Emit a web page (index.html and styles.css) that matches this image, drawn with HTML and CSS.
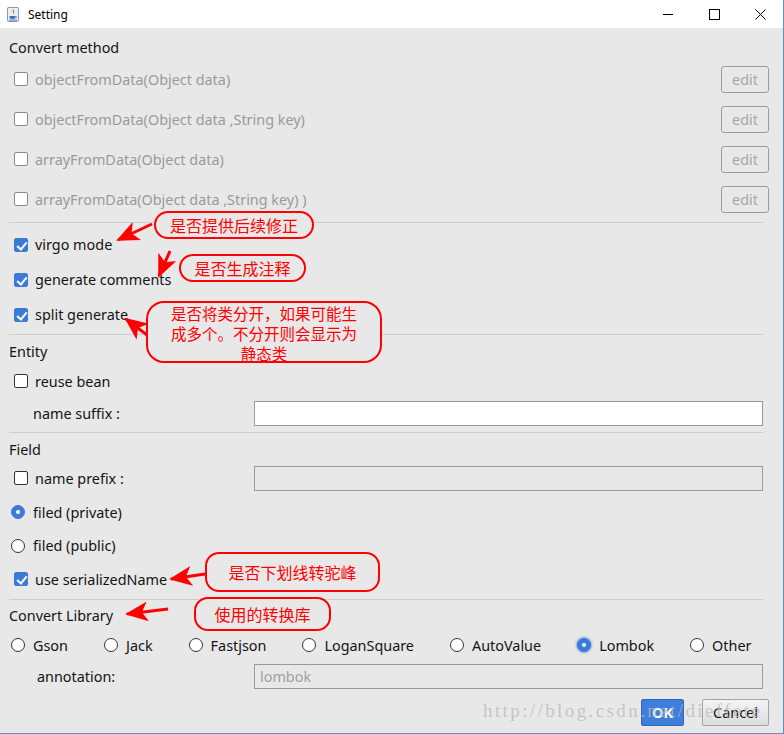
FILE: index.html
```html
<!DOCTYPE html>
<html>
<head>
<meta charset="utf-8">
<title>Setting</title>
<link rel="stylesheet" href="styles.css">
</head>
<body>
<div class="window">
  <div class="titlebar">
    <svg class="app-icon" viewBox="0 0 12 15" width="12" height="15">
      <rect x="0.5" y="0.5" width="11" height="14" rx="1" fill="#e6edf6" stroke="#7f98bb"/>
      <path d="M6 2 C4.5 4 7.5 5 5.5 7.5 C7.5 6.5 8 4.5 6 2 Z" fill="#e8741c"/>
      <path d="M2.5 9 H8.5 V10 C8.5 11.5 7 12 5.5 12 C4 12 2.5 11.5 2.5 10 Z" fill="#3f6fb5"/>
      <path d="M8.5 9.3 C10 9.3 10 10.8 8.5 10.8" fill="none" stroke="#3f6fb5" stroke-width="0.8"/>
      <rect x="2" y="12.6" width="8" height="0.9" fill="#3f6fb5"/>
    </svg>
    <span class="title">Setting</span>
    <div class="controls">
      <span class="ctl"><svg width="10" height="10" viewBox="0 0 10 10"><path d="M0 5.5 H10" stroke="#000" stroke-width="1"/></svg></span>
      <span class="ctl"><svg width="11" height="11" viewBox="0 0 11 11"><rect x="0.5" y="0.5" width="10" height="10" fill="none" stroke="#000" stroke-width="1"/></svg></span>
      <span class="ctl"><svg width="11" height="11" viewBox="0 0 11 11"><path d="M0.5 0.5 L10.5 10.5 M10.5 0.5 L0.5 10.5" stroke="#000" stroke-width="1"/></svg></span>
    </div>
  </div>

  <div class="content">
    <div class="label-row lr-first">Convert method</div>

    <div class="method-row">
      <div class="check disabled"><span class="box"></span><span>objectFromData(Object data)</span></div>
      <button class="edit">edit</button>
    </div>
    <div class="method-row">
      <div class="check disabled"><span class="box"></span><span>objectFromData(Object data ,String key)</span></div>
      <button class="edit">edit</button>
    </div>
    <div class="method-row">
      <div class="check disabled"><span class="box"></span><span>arrayFromData(Object data)</span></div>
      <button class="edit">edit</button>
    </div>
    <div class="method-row">
      <div class="check disabled"><span class="box"></span><span>arrayFromData(Object data ,String key) )</span></div>
      <button class="edit">edit</button>
    </div>

    <div class="sep sep-a"></div>

    <div class="opt-row first"><div class="check"><span class="box on"></span><span>virgo mode</span></div></div>
    <div class="opt-row"><div class="check"><span class="box on"></span><span>generate comments</span></div></div>
    <div class="opt-row"><div class="check"><span class="box on"></span><span>split generate</span></div></div>

    <div class="sep sep-b"></div>

    <div class="label-row lr-entity">Entity</div>
    <div class="opt-row short"><div class="check"><span class="box"></span><span>reuse bean</span></div></div>
    <div class="input-row suffix">
      <span class="indent-label">name suffix :</span>
      <div class="field"></div>
    </div>

    <div class="sep sep-b"></div>

    <div class="label-row lr-field">Field</div>
    <div class="input-row prefix">
      <div class="check"><span class="box"></span><span>name prefix :</span></div>
      <div class="field off"></div>
    </div>
    <div class="radio-row private"><span class="radio on"></span><span>filed (private)</span></div>
    <div class="radio-row public"><span class="radio"></span><span>filed (public)</span></div>
    <div class="opt-row serial"><div class="check"><span class="box on"></span><span>use serializedName</span></div></div>

    <div class="sep sep-a"></div>

    <div class="label-row lr-lib">Convert Library</div>
    <div class="lib-row">
      <div class="lib"><span class="radio"></span><span>Gson</span></div>
      <div class="lib"><span class="radio"></span><span>Jack</span></div>
      <div class="lib"><span class="radio"></span><span>Fastjson</span></div>
      <div class="lib"><span class="radio"></span><span>LoganSquare</span></div>
      <div class="lib"><span class="radio"></span><span>AutoValue</span></div>
      <div class="lib"><span class="radio on glow"></span><span>Lombok</span></div>
      <div class="lib"><span class="radio"></span><span>Other</span></div>
    </div>
    <div class="input-row annot">
      <span class="annot-label">annotation:</span>
      <div class="field off"><span class="placeholder">lombok</span></div>
    </div>

    <div class="button-row">
      <button class="btn ok">OK</button>
      <button class="btn cancel">Cancel</button>
    </div>
  </div>

  <div class="watermark">http://blog.csdn.net/dieffete</div>

  <svg class="arrows" width="784" height="734" viewBox="0 0 784 734">
    <defs>
      <marker id="ah" markerUnits="userSpaceOnUse" markerWidth="24" markerHeight="20" refX="21" refY="10" orient="auto">
        <path d="M0,0 L23,10 L0,20 L6,10 Z" fill="#ff0000"/>
      </marker>
    </defs>
    <line x1="152" y1="224" x2="118" y2="240" stroke="#ff0000" stroke-width="3" marker-end="url(#ah)"/>
    <line x1="170" y1="251" x2="159" y2="276" stroke="#ff0000" stroke-width="3" marker-end="url(#ah)"/>
    <line x1="147" y1="335" x2="126" y2="319" stroke="#ff0000" stroke-width="3" marker-end="url(#ah)"/>
    <line x1="205" y1="574" x2="171" y2="579" stroke="#ff0000" stroke-width="3" marker-end="url(#ah)"/>
    <line x1="168" y1="609" x2="127" y2="614" stroke="#ff0000" stroke-width="3" marker-end="url(#ah)"/>
  </svg>

  <div class="bubble b1">是否提供后续修正</div>
  <div class="bubble b2">是否生成注释</div>
  <div class="bubble b3"><span class="bl">是否将类分开，如果可能生</span><span class="bl">成多个。不分开则会显示为</span><span class="bl">静态类</span></div>
  <div class="bubble b4">是否下划线转驼峰</div>
  <div class="bubble b5">使用的转换库</div>
</div>
</body>
</html>
```

FILE: styles.css
```css
* { box-sizing: border-box; }
html, body { margin: 0; padding: 0; }
body {
  width: 784px;
  height: 734px;
  overflow: hidden;
  background: #e8e8e8;
  font-family: "Noto Sans", "Liberation Sans", sans-serif;
  font-size: 14.4px;
  color: #141414;
}
.window {
  position: relative;
  width: 784px;
  height: 734px;
  background: #e8e8e8;
  border-right: 1px solid #6b8bc2;
  border-bottom: 1px solid #6b8bc2;
  display: flex;
  flex-direction: column;
}

/* title bar */
.titlebar {
  flex: none;
  height: 28px;
  background: #ffffff;
  display: flex;
  align-items: center;
  padding-left: 7px;
}
.app-icon { flex: none; }
.title { font-size: 12px; margin-left: 9px; color: #000; }
.controls { margin-left: auto; display: flex; }
.ctl {
  width: 46px;
  height: 28px;
  display: flex;
  align-items: center;
  justify-content: center;
}

/* content */
.content {
  display: flex;
  flex-direction: column;
  padding: 8px 14px 0 9px;
}
.label-row { display: flex; align-items: center; }
.lr-first { height: 23px; }
.lr-entity { height: 30px; margin-top: 1px; }
.lr-field { height: 32px; }
.lr-lib { height: 30px; }

.sep { height: 1px; background: #cdcdcd; margin-right: 6px; }
.sep-a { margin-top: 3px; }
.sep-b { margin-top: 2px; }

.method-row {
  height: 40px;
  display: flex;
  align-items: center;
  justify-content: space-between;
}
.check {
  display: flex;
  align-items: center;
  gap: 7px;
  margin-left: 5px;
}
.check.disabled { color: #9a9a9a; }
.box {
  width: 14px;
  height: 14px;
  border: 1px solid #333;
  border-radius: 2px;
  background: #fff;
  flex: none;
  position: relative;
}
.check.disabled .box { border-color: #8a8a8a; }
.box.on {
  background: #3b7ad9;
  border-color: #3b7ad9;
}
.box.on::after {
  content: "";
  position: absolute;
  left: 4px;
  top: 1px;
  width: 4px;
  height: 8px;
  border-right: 2px solid #fff;
  border-bottom: 2px solid #fff;
  transform: rotate(40deg);
}
.edit {
  width: 48px;
  height: 27px;
  border: 1px solid #9a9a9a;
  border-radius: 3px;
  background: #e8e8e8;
  color: #a6a6a6;
  font-family: inherit;
  font-size: 14.4px;
  padding: 0;
}

.opt-row { height: 35px; display: flex; align-items: center; }
.opt-row.first { margin-top: 4px; }
.opt-row.short { height: 30px; }
.opt-row.serial { height: 34px; }

.input-row { display: flex; align-items: center; }
.input-row.suffix { height: 34px; }
.input-row.prefix { height: 26px; }
.input-row.annot { height: 32px; }
.indent-label { padding-left: 24px; }
.annot-label { padding-left: 28px; }
.field {
  margin-left: auto;
  margin-right: 6px;
  width: 509px;
  height: 25px;
  border: 1px solid #9a9a9a;
  background: #ffffff;
  display: flex;
  align-items: center;
  padding-left: 5px;
}
.field.off { background: #e8e8e8; }
.placeholder { color: #a0a0a0; }

.radio-row { display: flex; align-items: center; gap: 8px; padding-left: 2px; }
.radio-row.private { height: 34px; margin-top: 4px; }
.radio-row.public { height: 33px; }
.radio {
  width: 14px;
  height: 14px;
  border-radius: 50%;
  border: 1px solid #333;
  background: #fff;
  flex: none;
  position: relative;
}
.radio.on {
  background: #3b7ad9;
  border-color: #3b7ad9;
}
.radio.on::after {
  content: "";
  position: absolute;
  left: 4px;
  top: 4px;
  width: 4px;
  height: 4px;
  border-radius: 50%;
  background: #fff;
}
.radio.glow { box-shadow: 0 0 2px 1px rgba(59, 122, 217, 0.55); }

.lib-row {
  height: 30px;
  display: flex;
  align-items: center;
  gap: 36px;
  padding-left: 2px;
}
.lib { display: flex; align-items: center; gap: 8px; }

.button-row {
  margin-top: 7px;
  height: 27px;
  display: flex;
  justify-content: flex-end;
  gap: 18px;
}
.btn {
  height: 27px;
  border-radius: 2px;
  font-family: inherit;
  font-size: 14.4px;
  padding: 0;
}
.btn.ok {
  width: 43px;
  background: #3f7fdc;
  border: 1px solid #2e66bd;
  color: #fff;
  font-weight: bold;
}
.btn.cancel {
  width: 67px;
  background: linear-gradient(#f4f4f4, #dcdcdc);
  border: 1px solid #a3a3a3;
  color: #141414;
}

/* overlays */
.watermark {
  position: absolute;
  left: 483px;
  top: 700px;
  font-family: "Liberation Serif", serif;
  font-size: 19px;
  letter-spacing: 2.4px;
  color: rgba(185, 185, 185, 0.75);
  white-space: nowrap;
  pointer-events: none;
}
.arrows {
  position: absolute;
  left: 0;
  top: 0;
  pointer-events: none;
}
.bubble {
  position: absolute;
  border: 2px solid #ff0000;
  border-radius: 14px;
  background: #e8e8e8;
  color: #ff0000;
  font-family: "Noto Sans CJK SC", sans-serif;
  font-size: 16px;
  line-height: 20px;
  text-align: center;
  display: flex;
  align-items: center;
  justify-content: center;
}
.b1 { left: 154px; top: 211px; width: 160px; height: 28px; }
.b2 { left: 179px; top: 254px; width: 127px; height: 28px; }
.b3 {
  left: 146px;
  top: 301px;
  width: 236px;
  height: 62px;
  border-radius: 18px;
  flex-direction: column;
  justify-content: flex-start;
  font-size: 15.5px;
}
.bl { display: block; height: 20px; line-height: 20px; }
.b4 { left: 205px; top: 552px; width: 175px; height: 40px; }
.b5 { left: 194px; top: 597px; width: 137px; height: 34px; }
```
